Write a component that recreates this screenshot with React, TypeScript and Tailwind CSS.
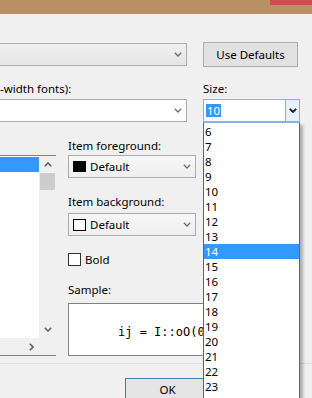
import type { ReactNode } from 'react'

const SIZES = [6, 7, 8, 9, 10, 11, 12, 13, 14, 15, 16, 17, 18, 19, 20, 21, 22, 23, 24, 26, 28]

function Chevron({ dark }: { dark?: boolean }) {
  return (
    <svg width="8" height="5" viewBox="0 0 8 5" className="shrink-0">
      <path
        d="M0.8 0.8 L4 4 L7.2 0.8"
        fill="none"
        stroke={dark ? '#1e1e1e' : '#6d6d6d'}
        strokeWidth={dark ? 1.8 : 1.3}
      />
    </svg>
  )
}

function Combo({ className, children }: { className: string; children?: ReactNode }) {
  return (
    <div
      className={`flex items-center justify-between border border-[#acacac] pr-[4px] ${className}`}
    >
      <div className="flex items-center gap-[4px]">{children}</div>
      <Chevron />
    </div>
  )
}

function Arrow({ dir }: { dir: 'up' | 'down' | 'right' }) {
  const d =
    dir === 'up' ? 'M0.8 4.2 L4 1 L7.2 4.2' : dir === 'down' ? 'M0.8 0.8 L4 4 L7.2 0.8' : 'M0.8 0.8 L4 4 L0.8 7.2'
  const w = dir === 'right' ? 5 : 8
  const h = dir === 'right' ? 8 : 5
  return (
    <svg width={w} height={h} viewBox={`0 0 ${w} ${h}`}>
      <path d={d} fill="none" stroke="#606060" strokeWidth="1.6" />
    </svg>
  )
}

export default function App() {
  return (
    <div className="relative flex h-[398px] w-[312px] flex-col overflow-hidden bg-[#f0f0f0] font-['Noto_Sans',sans-serif] text-[11.5px] text-[#000]">
      {/* title bar */}
      <div className="flex h-[15px] shrink-0 justify-end border-b border-[#f7f2ec] bg-[#b98f66]">
        <div className="h-[5px] w-[42px] bg-[#c75050]" />
      </div>

      {/* show settings + use defaults */}
      <div className="mt-[27px] flex items-center">
        <div className="-ml-[2px] flex h-[23px] w-[189px] items-center justify-end border border-[#acacac] bg-gradient-to-b from-[#f0f0f0] to-[#e5e5e5] pr-[4px]">
          <Chevron />
        </div>
        <button className="ml-[16px] flex h-[25px] w-[95px] items-center justify-center border border-[#adadad] bg-[#e1e1e1] leading-none">
          Use Defaults
        </button>
      </div>

      {/* font row */}
      <div className="mt-[14px] flex h-[16px] items-center leading-[16px]">
        <span className="w-[203px]">-width fonts):</span>
        <span>Size:</span>
      </div>
      <div className="mt-[2px] flex">
        <div className="-ml-[2px] flex h-[23px] w-[189px] items-center justify-end border border-[#acacac] bg-white pr-[4px]">
          <Chevron />
        </div>
        <div className="ml-[16px] flex h-[23px] w-[97px] items-stretch border border-[#7eb4ea] bg-white">
          <div className="flex flex-1 items-center pl-[2px]">
            <span className="bg-[#3399ff] px-px leading-[13px] text-white">10</span>
          </div>
          <div className="flex w-[14px] items-center justify-center border-l border-[#7eb4ea] bg-[#e5f1fb]">
            <Chevron dark />
          </div>
        </div>
      </div>

      {/* items + colours */}
      <div className="mt-[16px] flex items-start">
        <div className="-ml-[1px] mt-[17px] grid h-[201px] w-[57px] grid-cols-[39px_17px] grid-rows-[182px_17px] border border-[#828282] bg-white">
          <div className="pt-px">
            <div className="h-[15px] bg-[#3399ff]" />
          </div>
          <div className="flex flex-col bg-[#f0f0f0]">
            <div className="flex h-[17px] items-center justify-center">
              <Arrow dir="up" />
            </div>
            <div className="mx-px h-[17px] bg-[#cdcdcd]" />
            <div className="flex-1" />
            <div className="flex h-[17px] items-center justify-center">
              <Arrow dir="down" />
            </div>
          </div>
          <div className="flex items-center justify-end bg-[#f0f0f0] pr-[5px]">
            <Arrow dir="right" />
          </div>
          <div className="bg-[#f0f0f0]" />
        </div>

        <div className="ml-[12px] flex flex-col">
          <span className="h-[16px] leading-[16px]">Item foreground:</span>
          <Combo className="mt-px h-[23px] w-[128px] bg-gradient-to-b from-[#f7f7f7] to-[#efefef] pl-[4px]">
            <span className="h-[11px] w-[13px] bg-black" />
            <span>Default</span>
          </Combo>
          <span className="mt-[16px] h-[16px] leading-[16px]">Item background:</span>
          <Combo className="mt-[3px] h-[23px] w-[128px] bg-gradient-to-b from-[#f7f7f7] to-[#efefef] pl-[4px]">
            <span className="h-[12px] w-[13px] border border-black bg-white" />
            <span>Default</span>
          </Combo>
          <label className="mt-[17px] flex h-[13px] items-center gap-[4px]">
            <span className="h-[13px] w-[13px] border border-[#333] bg-white" />
            <span>Bold</span>
          </label>
          <span className="mt-[16px] h-[16px] leading-[16px]">Sample:</span>
          <div className="mt-[5px] flex h-[53px] w-[228px] items-center border border-[#828282] bg-white pt-[5px] pl-[49px] font-['DejaVu_Sans_Mono',monospace] text-[12px] whitespace-pre">
            ij = I::oO(0)
          </div>
        </div>
      </div>

      {/* bottom bar */}
      <div className="mt-[7px] h-[2px] border-t border-[#dfdfdf] bg-[#f0f0f0]" />
      <div className="mt-[14px] flex">
        <button className="ml-[125px] flex h-[23px] w-[85px] items-center justify-center border border-[#3c7fb1] bg-[#e5e5e5]">
          OK
        </button>
      </div>

      {/* open size dropdown */}
      <ul className="absolute top-[122px] left-[203px] h-[290px] w-[97px] border border-[#646464] border-t-[#7eb4ea] bg-white pt-px shadow-[3px_3px_3px_rgba(0,0,0,0.28)]">
        {SIZES.map((s) => (
          <li
            key={s}
            className={`h-[15px] pl-[1px] leading-[15px] ${s === 14 ? 'bg-[#3399ff] text-white' : ''}`}
          >
            {s}
          </li>
        ))}
      </ul>
    </div>
  )
}
